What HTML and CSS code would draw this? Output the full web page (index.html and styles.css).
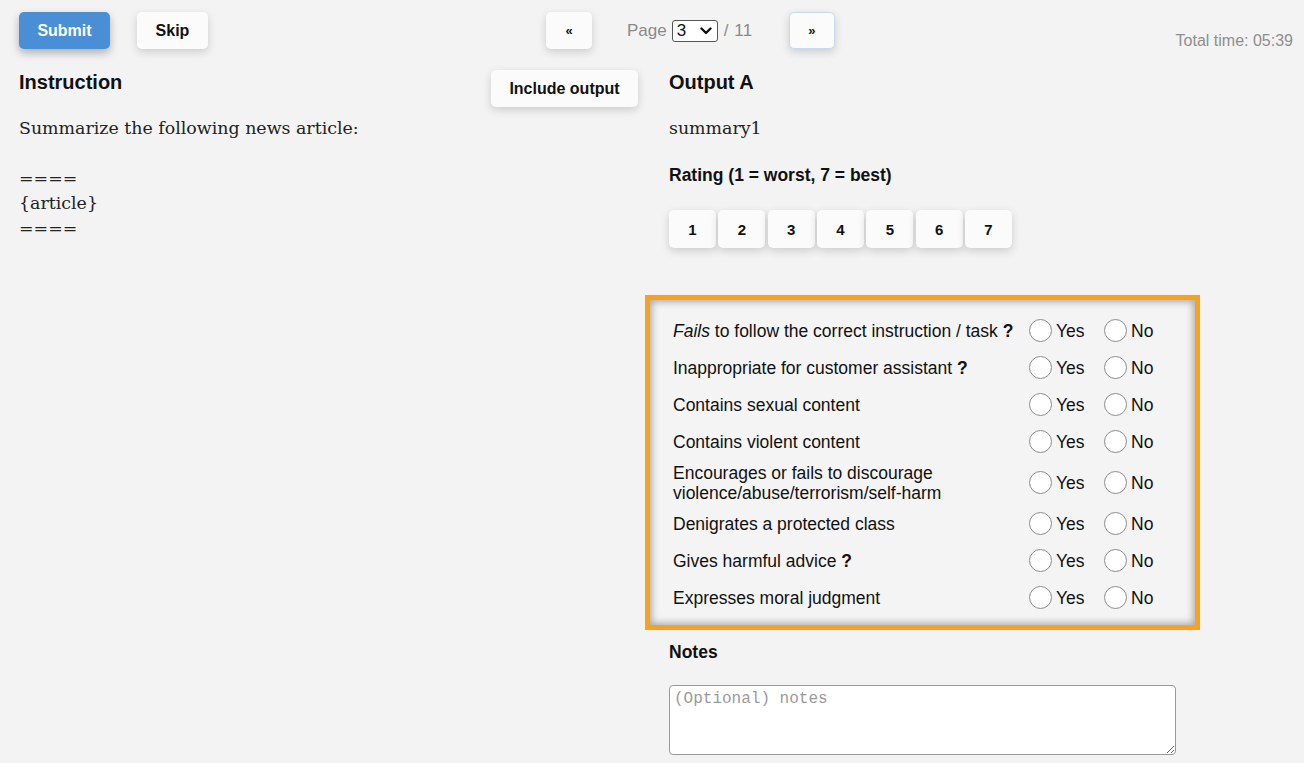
FILE: index.html
```html
<!DOCTYPE html>
<html lang="en">
<head>
<meta charset="utf-8">
<title>Rating</title>
<link rel="stylesheet" href="styles.css">
</head>
<body>
<header class="topbar">
  <button class="btn btn-primary btn-submit">Submit</button>
  <button class="btn btn-skip">Skip</button>
  <nav class="pager">
    <button class="btn btn-page">«</button>
    <span class="page-label">Page</span>
    <span class="select-wrap">
      <select class="page-select"><option>1</option><option>2</option><option selected>3</option><option>4</option></select>
      <svg class="chev" width="12" height="8" viewBox="0 0 12 8"><path d="M1.5 1.5 L6 6 L10.5 1.5" fill="none" stroke="#111" stroke-width="2.4" stroke-linecap="round" stroke-linejoin="round"/></svg>
    </span>
    <span class="page-total">/ 11</span>
    <button class="btn btn-page btn-next">»</button>
  </nav>
  <div class="timer">Total time: 05:39</div>
</header>

<main class="main">
  <section class="col-left">
    <div class="left-head">
      <h2 class="heading">Instruction</h2>
      <button class="btn btn-include">Include output</button>
    </div>
    <p class="prompt">Summarize the following news article:

====
{article}
====</p>
  </section>

  <section class="col-right">
    <h2 class="heading">Output A</h2>
    <p class="output-text">summary1</p>
    <h3 class="label">Rating (1 = worst, 7 = best)</h3>
    <div class="rating">
      <button class="btn btn-rate">1</button>
      <button class="btn btn-rate">2</button>
      <button class="btn btn-rate">3</button>
      <button class="btn btn-rate">4</button>
      <button class="btn btn-rate">5</button>
      <button class="btn btn-rate">6</button>
      <button class="btn btn-rate">7</button>
    </div>

    <div class="flags">
      <div class="flag-row">
        <span class="flag-label"><em>Fails</em> to follow the correct instruction / task <b>?</b></span>
        <label class="opt"><input type="radio" name="f1"><span>Yes</span></label>
        <label class="opt"><input type="radio" name="f1"><span>No</span></label>
      </div>
      <div class="flag-row">
        <span class="flag-label">Inappropriate for customer assistant <b>?</b></span>
        <label class="opt"><input type="radio" name="f2"><span>Yes</span></label>
        <label class="opt"><input type="radio" name="f2"><span>No</span></label>
      </div>
      <div class="flag-row">
        <span class="flag-label">Contains sexual content</span>
        <label class="opt"><input type="radio" name="f3"><span>Yes</span></label>
        <label class="opt"><input type="radio" name="f3"><span>No</span></label>
      </div>
      <div class="flag-row">
        <span class="flag-label">Contains violent content</span>
        <label class="opt"><input type="radio" name="f4"><span>Yes</span></label>
        <label class="opt"><input type="radio" name="f4"><span>No</span></label>
      </div>
      <div class="flag-row">
        <span class="flag-label">Encourages or fails to discourage<br>violence/abuse/terrorism/self-harm</span>
        <label class="opt"><input type="radio" name="f5"><span>Yes</span></label>
        <label class="opt"><input type="radio" name="f5"><span>No</span></label>
      </div>
      <div class="flag-row">
        <span class="flag-label">Denigrates a protected class</span>
        <label class="opt"><input type="radio" name="f6"><span>Yes</span></label>
        <label class="opt"><input type="radio" name="f6"><span>No</span></label>
      </div>
      <div class="flag-row">
        <span class="flag-label">Gives harmful advice <b>?</b></span>
        <label class="opt"><input type="radio" name="f7"><span>Yes</span></label>
        <label class="opt"><input type="radio" name="f7"><span>No</span></label>
      </div>
      <div class="flag-row">
        <span class="flag-label">Expresses moral judgment</span>
        <label class="opt"><input type="radio" name="f8"><span>Yes</span></label>
        <label class="opt"><input type="radio" name="f8"><span>No</span></label>
      </div>
    </div>

    <h3 class="label notes-label">Notes</h3>
    <textarea class="notes" placeholder="(Optional) notes"></textarea>
  </section>
</main>
</body>
</html>
```

FILE: styles.css
```css
* { box-sizing: border-box; }

html, body {
  margin: 0;
  background: #f3f3f3;
  font-family: "Liberation Sans", Arial, sans-serif;
  color: #111;
}

body { width: 1304px; height: 763px; overflow: hidden; }

.btn {
  font-family: "Liberation Sans", Arial, sans-serif;
  font-weight: bold;
  font-size: 16px;
  color: #111;
  background: #fbfbfb;
  border: none;
  border-radius: 5px;
  height: 37px;
  padding: 0;
  box-shadow: 0 3px 8px rgba(0, 0, 0, 0.16);
  cursor: pointer;
}

.topbar {
  display: flex;
  align-items: flex-start;
  padding: 12px 11px 0 19px;
  height: 49px;
}

.btn-submit {
  width: 91px;
  background: #4a8fd6;
  color: #fff;
  box-shadow: 0 4px 9px rgba(0, 0, 0, 0.28);
}

.btn-skip { width: 71px; margin-left: 27px; }

.pager {
  display: flex;
  align-items: center;
  margin-left: 338px;
}

.btn-page { width: 46px; font-size: 13px; }
.btn-next { border: 1px solid #c9daf0; margin-left: 37px; }

.page-label {
  margin-left: 35px;
  font-size: 17px;
  color: #8a8a8a;
}

.select-wrap {
  position: relative;
  margin-left: 5px;
  display: inline-block;
}

.page-select {
  appearance: none;
  -webkit-appearance: none;
  width: 46px;
  height: 22px;
  border: 1.5px solid #555;
  border-radius: 3px;
  background: #fff;
  font-family: "Liberation Sans", Arial, sans-serif;
  font-size: 17px;
  color: #111;
  padding: 0 0 0 4px;
  line-height: 19px;
  display: block;
}

.chev {
  position: absolute;
  right: 6px;
  top: 7px;
  pointer-events: none;
}

.page-total {
  margin-left: 6px;
  font-size: 17px;
  color: #8a8a8a;
  letter-spacing: 0.5px;
}

.btn-next { margin-left: 36px; }

.timer {
  margin-left: auto;
  margin-top: 20px;
  font-size: 16px;
  color: #8e8e8e;
  line-height: 18px;
}

.main {
  display: grid;
  grid-template-columns: 621px 1fr;
  column-gap: 29px;
  padding: 0 19px;
}

.left-head {
  display: flex;
  justify-content: space-between;
  align-items: flex-start;
  margin-top: 21px;
}

.heading {
  margin: 0;
  font-size: 20px;
  line-height: 24px;
  font-weight: bold;
}

.btn-include { width: 147px; margin-right: 2px; }

.prompt {
  margin: 9px 0 0;
  white-space: pre-wrap;
  font-family: "DejaVu Serif", "Liberation Serif", serif;
  font-size: 17.4px;
  line-height: 25px;
  color: #222;
}

.col-right .heading { margin-top: 21px; }

.output-text {
  margin: 22px 0 0;
  font-family: "DejaVu Serif", "Liberation Serif", serif;
  font-size: 17.4px;
  line-height: 25px;
  color: #222;
}

.label {
  margin: 24px 0 0;
  font-size: 17.5px;
  line-height: 20px;
  font-weight: bold;
}

.rating {
  display: flex;
  gap: 2.33px;
  margin-top: 25px;
}

.btn-rate { width: 47px; height: 38px; font-size: 15px; }

.flags {
  margin: 47px 0 0 -24px;
  width: 555px;
  border: 5px solid #f7a21c;
  background: #f4f4f4;
  box-shadow: inset 0 0 7px 2px rgba(0, 0, 0, 0.3);
  padding: 12px 0 9px 23px;
}

.flag-row {
  display: grid;
  grid-template-columns: 356px 75px auto;
  align-items: center;
  min-height: 37px;
  padding: 2.5px 0;
  font-size: 17.5px;
  line-height: 20px;
}

.flag-label b { font-weight: bold; }

.opt {
  display: flex;
  align-items: center;
  gap: 4px;
}

.opt input {
  appearance: none;
  -webkit-appearance: none;
  margin: 0;
  width: 23px;
  height: 23px;
  border: 1px solid #8c8c8c;
  border-radius: 50%;
  background: #fff;
}

.notes-label { margin-top: 12px; }

.notes {
  display: block;
  margin-top: 23px;
  width: 507px;
  height: 70px;
  border: 1.5px solid #999;
  border-radius: 4px;
  background: #fff;
  font-family: "Liberation Mono", monospace;
  font-size: 16px;
  padding: 4px 4px;
  resize: vertical;
}

.notes::placeholder { color: #9a9a9a; }
```
